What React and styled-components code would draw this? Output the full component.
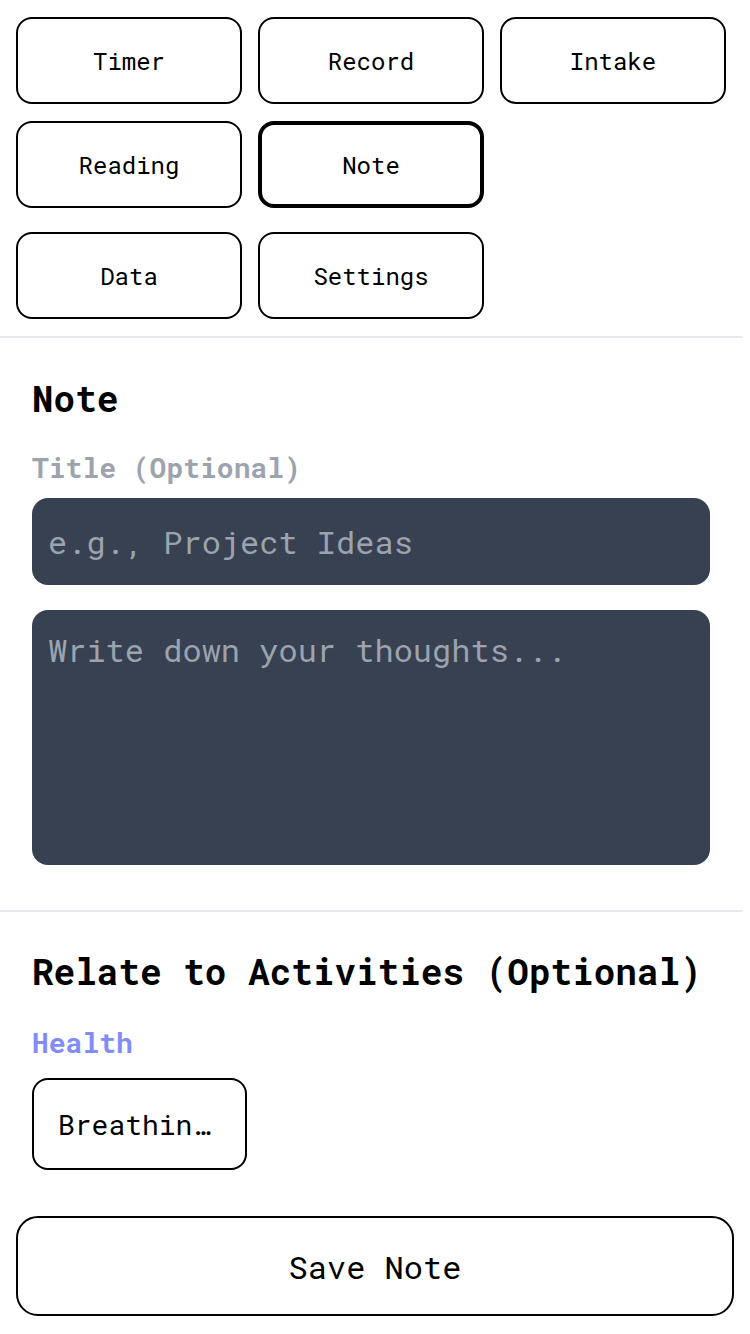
import React from "react";
import styled, { createGlobalStyle } from "styled-components";

const GlobalStyle = createGlobalStyle`
  html, body {
    margin: 0;
    padding: 0;
    background: #ffffff;
  }
  body {
    font-family: "Roboto Mono", "DejaVu Sans Mono", "Liberation Mono", monospace;
    color: #000000;
  }
  * {
    box-sizing: border-box;
  }
`;

const Page = styled.div`
  width: 742px;
  display: flex;
  flex-direction: column;
`;

const NavGrid = styled.nav`
  display: grid;
  grid-template-columns: repeat(3, 226px);
  grid-template-rows: 87px 94px 87px;
  column-gap: 16px;
  row-gap: 17px;
  padding: 17px 16px 17px 16px;
  align-items: start;
`;

const NavButton = styled.button`
  height: 87px;
  grid-column-start: ${(p) => (p.$newRow ? 1 : "auto")};
  border: ${(p) => (p.$active ? "4px" : "2px")} solid #000000;
  border-radius: 16px;
  background: #ffffff;
  font-family: inherit;
  font-size: 24px;
  color: #000000;
  cursor: pointer;
`;

const Divider = styled.hr`
  margin: 0;
  border: none;
  height: 2px;
  background: #e5e7eb;
`;

const Section = styled.section`
  display: flex;
  flex-direction: column;
  padding: ${(p) => p.$padding};
`;

const Heading = styled.h2`
  margin: 0;
  font-size: 36px;
  line-height: 44px;
  font-weight: 700;
`;

const Label = styled.label`
  display: block;
  font-size: 28px;
  line-height: 36px;
  font-weight: 700;
  color: ${(p) => p.$color};
  margin: ${(p) => p.$margin};
`;

const TextInput = styled.input`
  width: 678px;
  height: 87px;
  border: none;
  border-radius: 16px;
  background: #374151;
  padding: 0 16px;
  font-family: inherit;
  font-size: 32px;
  color: #ffffff;
  outline: none;

  &::placeholder {
    color: #9ca3af;
  }
`;

const TextArea = styled.textarea`
  width: 678px;
  height: 255px;
  margin-top: 25px;
  border: none;
  border-radius: 16px;
  background: #374151;
  padding: 20px 16px;
  font-family: inherit;
  font-size: 32px;
  line-height: 40px;
  color: #ffffff;
  resize: none;
  outline: none;

  &::placeholder {
    color: #9ca3af;
  }
`;

const ChipRow = styled.div`
  display: flex;
  flex-wrap: wrap;
  gap: 16px;
`;

const Chip = styled.button`
  width: 215px;
  height: 92px;
  border: 2px solid #000000;
  border-radius: 16px;
  background: #ffffff;
  padding: 0 24px;
  font-family: inherit;
  font-size: 28px;
  color: #000000;
  text-align: left;
  white-space: nowrap;
  overflow: hidden;
  text-overflow: ellipsis;
`;

const SaveButton = styled.button`
  margin: 0 8px 0 16px;
  height: 100px;
  border: 2px solid #000000;
  border-radius: 22px;
  background: #ffffff;
  font-family: inherit;
  font-size: 32px;
  color: #000000;
  cursor: pointer;
`;

const tabs = [
  { name: "Timer" },
  { name: "Record" },
  { name: "Intake" },
  { name: "Reading" },
  { name: "Note", active: true },
  { name: "Data", newRow: true },
  { name: "Settings" },
];

export default function App() {
  return (
    <>
      <GlobalStyle />
      <Page>
        <NavGrid>
          {tabs.map((t) => (
            <NavButton key={t.name} $active={t.active} $newRow={t.newRow}>
              {t.name}
            </NavButton>
          ))}
        </NavGrid>
        <Divider />
        <Section $padding="38px 32px 45px 32px">
          <Heading>Note</Heading>
          <Label $color="#9ca3af" $margin="30px 0 12px 0">
            Title (Optional)
          </Label>
          <TextInput placeholder="e.g., Project Ideas" />
          <TextArea placeholder="Write down your thoughts..." />
        </Section>
        <Divider />
        <Section $padding="37px 32px 46px 32px">
          <Heading>Relate to Activities (Optional)</Heading>
          <Label $color="#818cf8" $margin="32px 0 17px 0">
            Health
          </Label>
          <ChipRow>
            <Chip>Breathing Exercise</Chip>
          </ChipRow>
        </Section>
        <SaveButton>Save Note</SaveButton>
      </Page>
    </>
  );
}
